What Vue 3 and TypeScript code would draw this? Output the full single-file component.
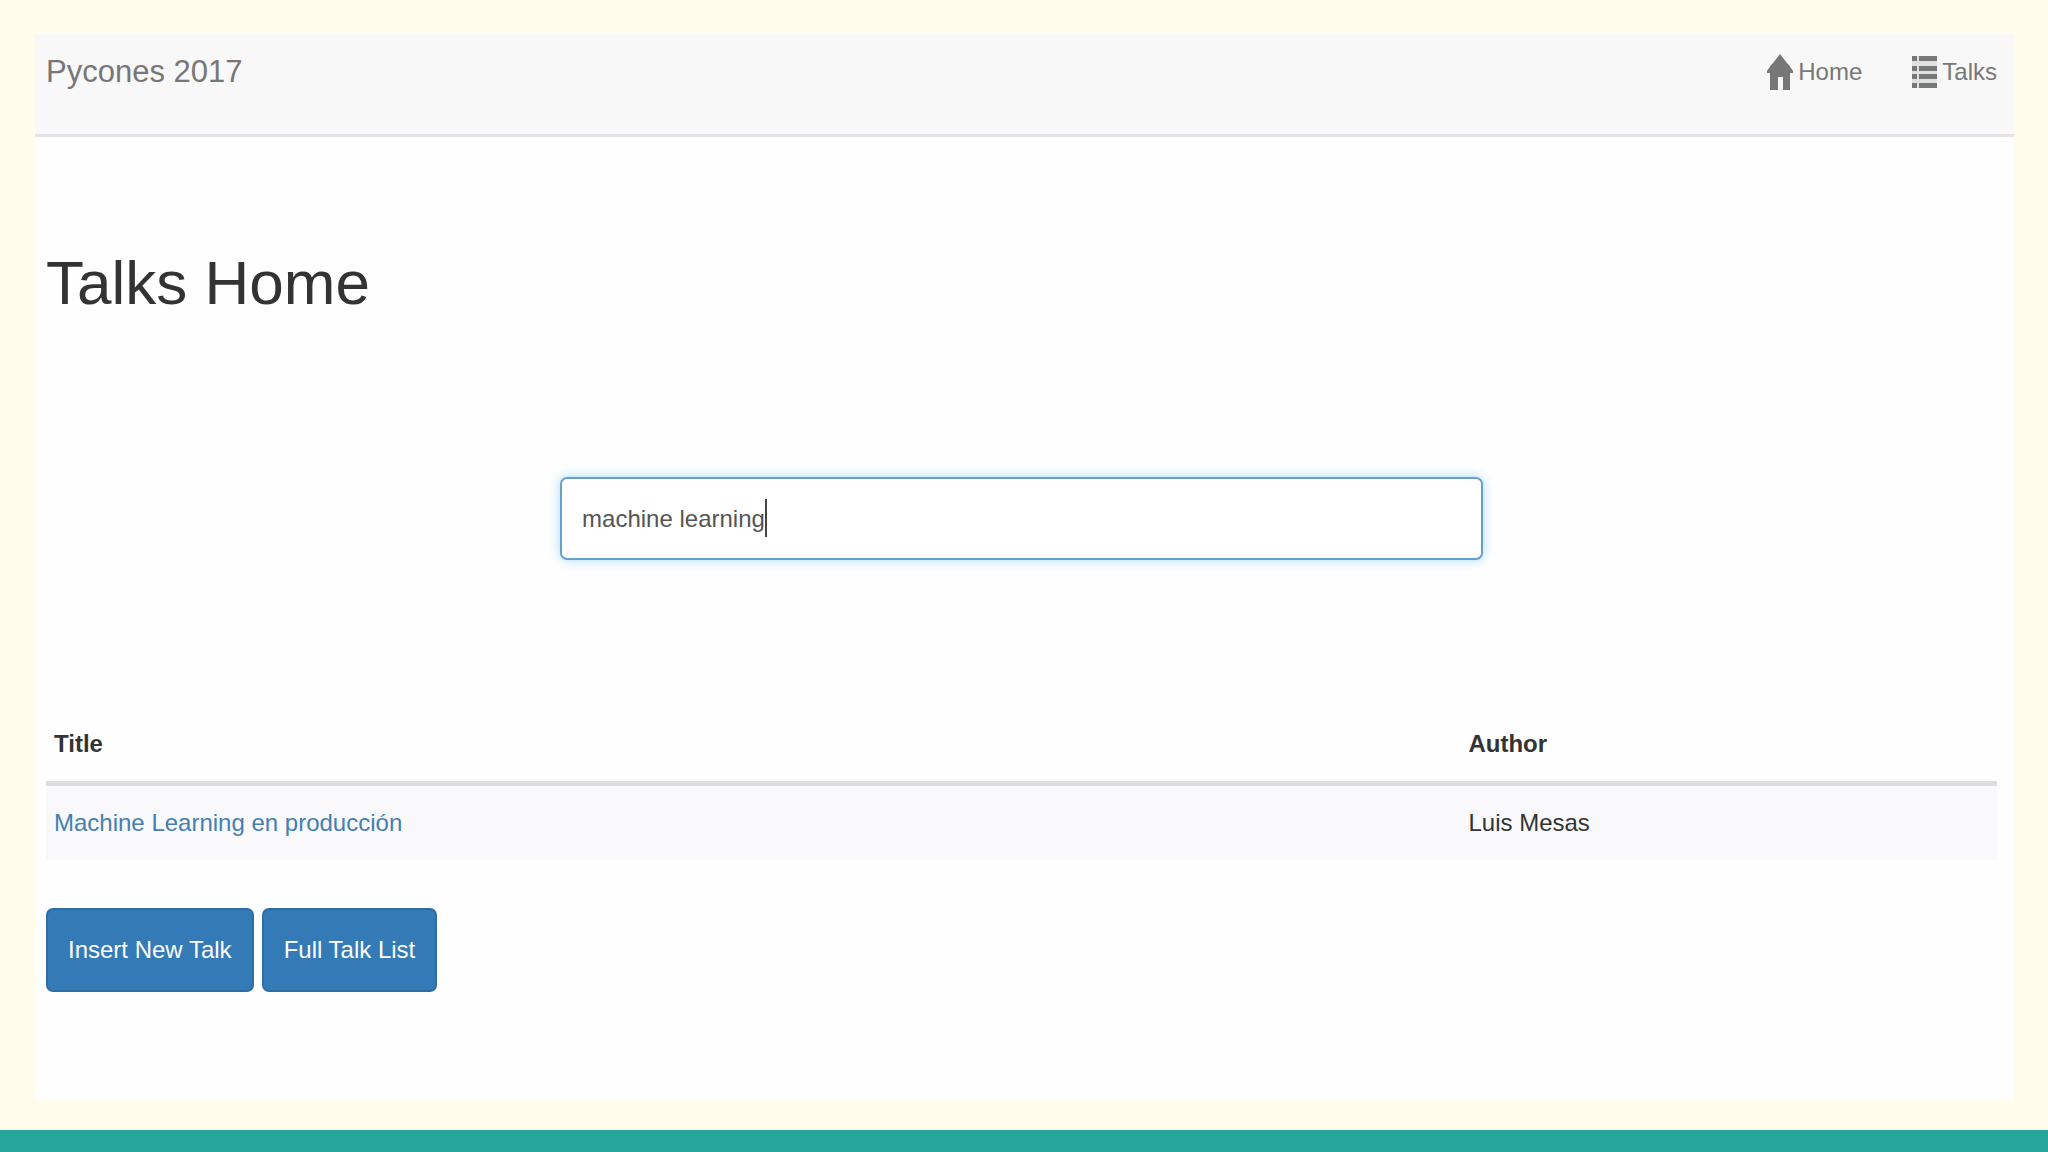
<script setup lang="ts">
import { onMounted, ref } from 'vue'

interface Talk {
  title: string
  author: string
}

const query = ref<string>('machine learning')
const searchBox = ref<HTMLInputElement | null>(null)
const talks: Talk[] = [{ title: 'Machine Learning en producción', author: 'Luis Mesas' }]

onMounted(() => {
  const box = searchBox.value
  if (box) {
    box.focus()
    box.setSelectionRange(box.value.length, box.value.length)
  }
})
</script>

<template>
  <div class="page">
    <div class="sheet">
      <header class="navbar">
        <a class="brand" href="#">Pycones 2017</a>
        <nav class="links">
          <a class="link" href="#home">
            <svg class="icon-home" viewBox="0 0 26 36" aria-hidden="true">
              <path d="M13 0 L20 9 L22 11 L26 17 V19 H23 V36 H16 V23 H11 V36 H3 V19 H0 V17 L4 11 L6 9 Z" fill="currentColor" />
            </svg>
            <span>Home</span>
          </a>
          <a class="link" href="#talks">
            <svg class="icon-list" viewBox="0 0 25 32" aria-hidden="true">
              <path d="M0 0H25V32H0Z" fill="#dfe2e3" />
              <path d="M0 0H5V5H0ZM7 0H25V5H7ZM0 10H5V15H0ZM7 10H25V15H7ZM0 18H5V23H0ZM7 18H25V23H7ZM0 27H5V32H0ZM7 27H25V32H7Z" fill="currentColor" />
            </svg>
            <span>Talks</span>
          </a>
        </nav>
      </header>

      <main class="content">
        <h1 class="heading">Talks Home</h1>

        <form class="search" role="search" @submit.prevent>
          <div class="search-field">
            <input ref="searchBox" v-model="query" class="search-input" type="text" aria-label="Search talks" spellcheck="false" autocomplete="off" />
            <span class="caret" aria-hidden="true"></span>
          </div>
        </form>

        <table class="talks">
          <thead>
            <tr>
              <th class="col-title" scope="col">Title</th>
              <th scope="col">Author</th>
            </tr>
          </thead>
          <tbody>
            <tr v-for="talk in talks" :key="talk.title">
              <td><a class="talk-link" href="#talk">{{ talk.title }}</a></td>
              <td>{{ talk.author }}</td>
            </tr>
          </tbody>
        </table>

        <div class="actions">
          <button class="btn" type="button">Insert New Talk</button>
          <button class="btn" type="button">Full Talk List</button>
        </div>
      </main>
    </div>
    <div class="strip"></div>
  </div>
</template>

<style>
body {
  margin: 0;
}
</style>

<style scoped>
.page {
  display: flex;
  flex-direction: column;
  min-height: 100vh;
  background: #fffcec;
  color: #333;
  font-family: "Liberation Sans", Arial, sans-serif;
  font-size: 24px;
  line-height: 40px;
}

.page *,
.page {
  box-sizing: border-box;
}

.sheet {
  flex: 1;
  margin: 34px 34px 30px 35px;
  background: #fefefe;
}

.navbar {
  display: flex;
  justify-content: space-between;
  align-items: flex-start;
  padding: 18px 17px 42px 11px;
  border-bottom: 3px solid #e4e2e6;
  background: #f8f8f8;
}

.brand {
  color: #777;
  font-size: 31px;
  text-decoration: none;
}

.links {
  display: flex;
  gap: 50px;
}

.link {
  display: flex;
  align-items: center;
  gap: 5px;
  color: #777;
  text-decoration: none;
}

.icon-home {
  width: 26px;
  height: 36px;
}

.icon-list {
  width: 25px;
  height: 32px;
}

.content {
  padding: 96px 17px 0 11px;
}

.heading {
  margin: 0;
  font-size: 62px;
  font-weight: 400;
  line-height: 100px;
}

.search {
  display: flex;
  justify-content: center;
  padding: 144px 0 147px;
}

.search-field {
  position: relative;
  width: 47.3%;
}

.search-input {
  display: block;
  width: 100%;
  height: 83px;
  padding: 0 20px;
  border: 2px solid #66a0cc;
  border-radius: 7px;
  outline: none;
  background: #fff;
  box-shadow: 0 0 12px #a9daf8;
  color: #555;
  caret-color: transparent;
  font: inherit;
}

.caret {
  position: absolute;
  top: 22px;
  left: 205px;
  width: 2px;
  height: 38px;
  background: #444;
}

.talks {
  width: 100%;
  border-collapse: separate;
  border-spacing: 0;
  table-layout: fixed;
  text-align: left;
}

.talks th,
.talks td {
  padding: 17px 8px;
}

.talks th {
  border-bottom: 5px solid #dddddf;
}

.talks td {
  background: #f9f8fb;
}

.talks .col-title {
  width: 72.5%;
}

.talk-link {
  color: #4380b2;
  text-decoration: none;
}

.actions {
  display: flex;
  gap: 8px;
  padding: 48px 0;
}

.btn {
  height: 84px;
  padding: 0 20px;
  border: 2px solid #2e6da4;
  border-radius: 7px;
  background: #337ab7;
  color: #fff;
  font: inherit;
}

.strip {
  height: 22px;
  background: #26a69a;
}
</style>
